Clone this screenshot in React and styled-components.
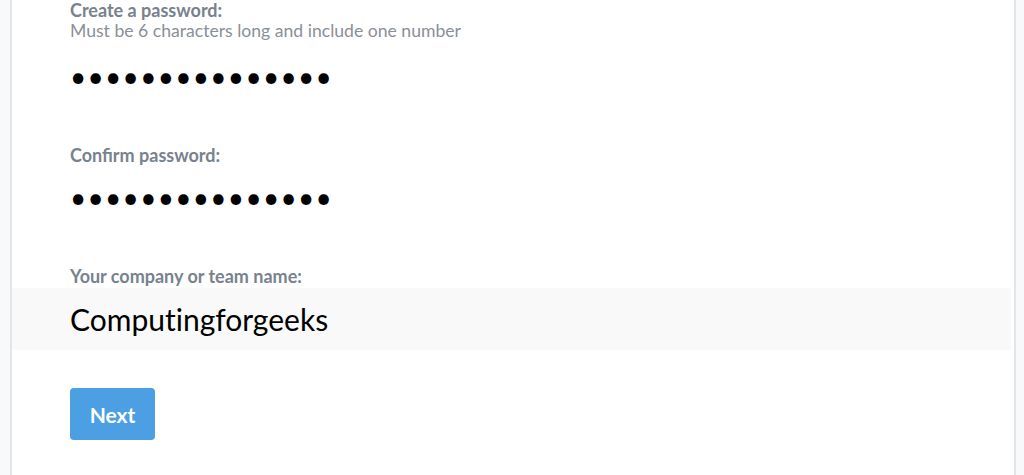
import React from "react";
import styled, { createGlobalStyle } from "styled-components";

const Global = createGlobalStyle`
  html, body { margin: 0; padding: 0; background: #f8f9fa; }
  body { font-family: Lato, "Open Sans", sans-serif; }
`;

const Page = styled.div`
  height: 475px;
  padding: 0 8px 0 10px;
  overflow: hidden;
`;

const Card = styled.div`
  height: 100%;
  background: #ffffff;
  border-left: 2px solid #e4e5e7;
  border-right: 2px solid #e4e5e7;
  box-sizing: border-box;
  display: flex;
  flex-direction: column;
`;

const Field = styled.div`
  display: flex;
  flex-direction: column;
  margin-top: ${(p) => p.$mt || 0}px;
`;

const Label = styled.label`
  padding-left: 58px;
  font-size: 18px;
  font-weight: 700;
  line-height: 20px;
  color: #78828e;
`;

const Hint = styled.div`
  padding-left: 58px;
  font-size: 17.6px;
  line-height: 21px;
  color: #8a9098;
`;

const Input = styled.input`
  border: none;
  outline: none;
  margin: ${(p) => p.$mt || 0}px ${(p) => (p.$filled ? 3 : 0)}px 0 0;
  padding: 0 0 0 58px;
  height: ${(p) => p.$h || 40}px;
  background: ${(p) => (p.$filled ? "#f9f9f9" : "#ffffff")};
  font-family: Lato, sans-serif;
  font-size: ${(p) => p.$fs || 26}px;
  letter-spacing: ${(p) => p.$ls || 0}px;
  font-variant-ligatures: none;
  color: #000;
  box-sizing: border-box;
  width: auto;
`;

const Button = styled.button`
  margin: 38px 0 0 58px;
  width: 85px;
  height: 52px;
  border: none;
  border-radius: 4px;
  background: #4c9fe3;
  color: #fff;
  font-family: Lato, sans-serif;
  font-weight: 700;
  font-size: 21px;
  cursor: pointer;
`;

export default function App() {
  return (
    <>
      <Global />
      <Page>
        <Card>
          <Field>
            <Label>Create a password:</Label>
            <Hint>Must be 6 characters long and include one number</Hint>
            <Input type="password" readOnly defaultValue="abcdefghijklmn1" $mt={15} $h={40} $fs={28} $ls={1.3} />
          </Field>
          <Field $mt={49}>
            <Label>Confirm password:</Label>
            <Input type="password" readOnly defaultValue="abcdefghijklmn1" $mt={12} $h={40} $fs={28} $ls={1.3} />
          </Field>
          <Field $mt={49}>
            <Label>Your company or team name:</Label>
            <Input type="text" readOnly defaultValue="Computingforgeeks" $mt={2} $h={62} $fs={30} $filled />
          </Field>
          <Button>Next</Button>
        </Card>
      </Page>
    </>
  );
}
